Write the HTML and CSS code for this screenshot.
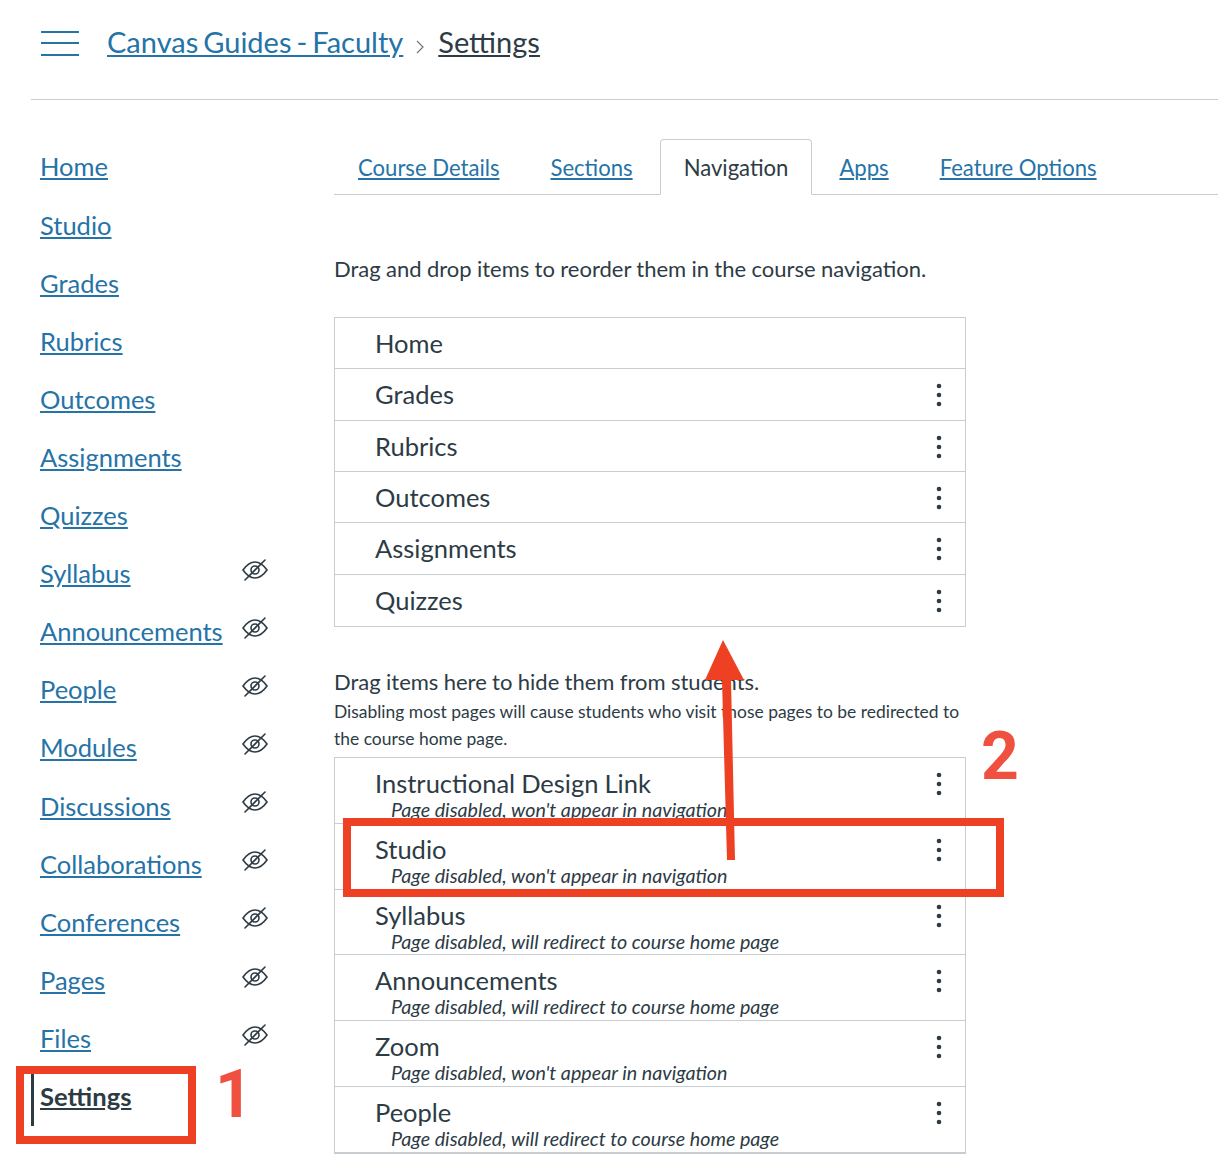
FILE: index.html
```html
<!DOCTYPE html>
<html lang="en">
<head>
  <meta charset="UTF-8" />
  <title>Settings</title>
  <link rel="stylesheet" href="styles.css">
</head>
<body>
  <svg width="0" height="0" class="defs">
    <symbol id="eye" viewBox="0 0 26 22">
      <path d="M1 11 C6 4 10 3 13 3 C16 3 20 4 25 11 C20 18 16 19 13 19 C10 19 6 18 1 11 Z" fill="none" stroke="#2d3b45" stroke-width="1.6" />
      <circle cx="13" cy="11" r="4" fill="none" stroke="#2d3b45" stroke-width="1.6" />
      <path d="M3 21 L23 1" stroke="#2d3b45" stroke-width="1.6" stroke-linecap="round" />
    </symbol>
    <symbol id="dots" viewBox="0 0 6 24">
      <circle cx="3" cy="3" r="2.3" fill="#2d3b45" />
      <circle cx="3" cy="12" r="2.3" fill="#2d3b45" />
      <circle cx="3" cy="21" r="2.3" fill="#2d3b45" />
    </symbol>
  </svg>

  <header class="top">
    <div class="burger"><span></span><span></span><span></span></div>
    <a href="#" class="crumb">Canvas Guides - Faculty</a>
    <svg class="chevron" width="8" height="14" viewBox="0 0 8 14"><path d="M1 1 L7 7 L1 13" fill="none" stroke="#6b7780" stroke-width="1.2" /></svg>
    <a href="#" class="crumb current">Settings</a>
  </header>

  <div class="page">
    <nav class="side">
      <div class="side-item"><a href="#">Home</a></div>
      <div class="side-item"><a href="#">Studio</a></div>
      <div class="side-item"><a href="#">Grades</a></div>
      <div class="side-item"><a href="#">Rubrics</a></div>
      <div class="side-item"><a href="#">Outcomes</a></div>
      <div class="side-item"><a href="#">Assignments</a></div>
      <div class="side-item"><a href="#">Quizzes</a></div>
      <div class="side-item"><a href="#">Syllabus</a><svg class="eye"><use href="#eye" /></svg></div>
      <div class="side-item"><a href="#">Announcements</a><svg class="eye"><use href="#eye" /></svg></div>
      <div class="side-item"><a href="#">People</a><svg class="eye"><use href="#eye" /></svg></div>
      <div class="side-item"><a href="#">Modules</a><svg class="eye"><use href="#eye" /></svg></div>
      <div class="side-item"><a href="#">Discussions</a><svg class="eye"><use href="#eye" /></svg></div>
      <div class="side-item"><a href="#">Collaborations</a><svg class="eye"><use href="#eye" /></svg></div>
      <div class="side-item"><a href="#">Conferences</a><svg class="eye"><use href="#eye" /></svg></div>
      <div class="side-item"><a href="#">Pages</a><svg class="eye"><use href="#eye" /></svg></div>
      <div class="side-item"><a href="#">Files</a><svg class="eye"><use href="#eye" /></svg></div>
      <div class="side-item active"><a href="#">Settings</a></div>
    </nav>

    <main class="content">
      <div class="tabs">
        <a href="#" class="tab">Course Details</a>
        <a href="#" class="tab">Sections</a>
        <span class="tab selected">Navigation</span>
        <a href="#" class="tab">Apps</a>
        <a href="#" class="tab">Feature Options</a>
      </div>

      <p class="intro">Drag and drop items to reorder them in the course navigation.</p>

      <ul class="list">
        <li class="row">Home</li>
        <li class="row">Grades<svg class="dots"><use href="#dots" /></svg></li>
        <li class="row">Rubrics<svg class="dots"><use href="#dots" /></svg></li>
        <li class="row">Outcomes<svg class="dots"><use href="#dots" /></svg></li>
        <li class="row">Assignments<svg class="dots"><use href="#dots" /></svg></li>
        <li class="row">Quizzes<svg class="dots"><use href="#dots" /></svg></li>
      </ul>

      <p class="hide-title">Drag items here to hide them from students.</p>
      <p class="hide-note">Disabling most pages will cause students who visit those pages to be redirected to the course home page.</p>

      <ul class="list hidden-list">
        <li class="row tall">Instructional Design Link<em>Page disabled, won't appear in navigation</em><svg class="dots"><use href="#dots" /></svg></li>
        <li class="row tall">Studio<em>Page disabled, won't appear in navigation</em><svg class="dots"><use href="#dots" /></svg></li>
        <li class="row tall">Syllabus<em>Page disabled, will redirect to course home page</em><svg class="dots"><use href="#dots" /></svg></li>
        <li class="row tall">Announcements<em>Page disabled, will redirect to course home page</em><svg class="dots"><use href="#dots" /></svg></li>
        <li class="row tall">Zoom<em>Page disabled, won't appear in navigation</em><svg class="dots"><use href="#dots" /></svg></li>
        <li class="row tall">People<em>Page disabled, will redirect to course home page</em><svg class="dots"><use href="#dots" /></svg></li>
      </ul>
    </main>
  </div>

  <!-- red annotations on top of the screenshot -->
  <div class="mark mark-settings"></div>
  <div class="mark mark-studio"></div>
  <div class="num num-1">1</div>
  <div class="num num-2">2</div>
  <svg class="arrow" width="60" height="230" viewBox="0 0 60 230">
    <path d="M9 41 L27 1 L48 41 L35 41 L39 221 L31 221 L26 41 Z" fill="#ee4023" />
  </svg>
</body>
</html>
```

FILE: styles.css
```css
* {
  box-sizing: border-box;
}

html, body {
  height: 1154px;
  overflow: hidden;
}

body {
  margin: 0;
  position: relative;
  background: #fff;
  font-family: 'Lato', sans-serif;
  color: #2d3b45;
}

a {
  color: #2573a7;
}

.defs {
  position: absolute;
}

.top {
  display: flex;
  align-items: center;
  height: 100px;
  margin-left: 31px;
  padding: 0 0 17px 10px;
  border-bottom: 1px solid #c7cdd1;
}

.burger {
  width: 38px;
  height: 25px;
  margin: 4px 28px 0 0;
  display: flex;
  flex-direction: column;
  justify-content: space-between;
}

.burger span {
  height: 2px;
  background: #2573a7;
}

.crumb {
  font-size: 29px;
  word-spacing: -2.4px;
}

.crumb.current {
  color: #2d3b45;
}

.chevron {
  margin: 11px 14px 0 13px;
}

.page {
  display: flex;
  padding-top: 39px;
}

.side {
  width: 303px;
  margin-left: 31px;
  flex-shrink: 0;
}

.side-item {
  position: relative;
  height: 58.12px;
  padding: 11.4px 0 0 9px;
  font-size: 25.5px;
  line-height: 32px;
}

.eye {
  position: absolute;
  left: 211px;
  top: 13px;
  width: 26px;
  height: 22px;
}

.side-item.active {
  font-weight: 700;
  font-size: 25.6px;
}

.side-item.active a {
  color: #2d3b45;
}

.side-item.active::before {
  content: "";
  position: absolute;
  left: 0;
  top: 5px;
  width: 3px;
  height: 52px;
  background: #2d3b45;
}

.content {
  flex: 1;
}

.tabs {
  display: flex;
  gap: 3px;
  height: 56px;
  border-bottom: 1px solid #c7cdd1;
}

.tab {
  height: 56px;
  padding: 0 23px;
  font-size: 22.1px;
  line-height: 55px;
  border: 1px solid transparent;
}

.tab.selected {
  background: #fff;
  color: #2d3b45;
  border-color: #c7cdd1;
  border-bottom-color: #fff;
  border-radius: 4px 4px 0 0;
}

.intro {
  margin: 59px 0 33px;
  font-size: 22px;
  line-height: 30px;
  word-spacing: -0.3px;
}

.list {
  width: 632px;
  margin: 0;
  padding: 0;
  list-style: none;
  border: 1px solid #c7cdd1;
}

.row {
  position: relative;
  height: 51.33px;
  padding-left: 40px;
  font-size: 25.5px;
  word-spacing: -0.5px;
  line-height: 51px;
  border-bottom: 1px solid #c7cdd1;
}

.row:last-child {
  border-bottom: 0;
}

.row em {
  display: block;
  padding-left: 16px;
  font-size: 19.7px;
  word-spacing: 0;
  line-height: 24px;
}

.row.tall {
  height: 65.8px;
  padding-top: 11px;
  line-height: 29px;
}

.row.tall:last-child {
  border-bottom: 1px solid #c7cdd1;
}

.dots {
  position: absolute;
  right: 23px;
  top: 14px;
  width: 6px;
  height: 24px;
}

.hide-title {
  margin: 40px 0 2px;
  font-size: 22px;
  line-height: 29px;
  word-spacing: -0.3px;
}

.hide-note {
  width: 640px;
  margin: 0 0 5px;
  font-size: 17.45px;
  line-height: 27px;
}

.mark {
  position: absolute;
  border: 8px solid #ee4023;
}

.mark-settings {
  left: 16px;
  top: 1066px;
  width: 180px;
  height: 78px;
}

.mark-studio {
  left: 343px;
  top: 818px;
  width: 661px;
  height: 79px;
}

.num {
  position: absolute;
  font-family: 'Roboto', sans-serif;
  font-weight: 700;
  font-size: 66px;
  color: #ef5040;
  line-height: 1;
}

.num-1 {
  left: 215px;
  top: 1062px;
}

.num-2 {
  left: 981px;
  top: 724px;
}

.arrow {
  position: absolute;
  left: 696px;
  top: 639px;
}
```
